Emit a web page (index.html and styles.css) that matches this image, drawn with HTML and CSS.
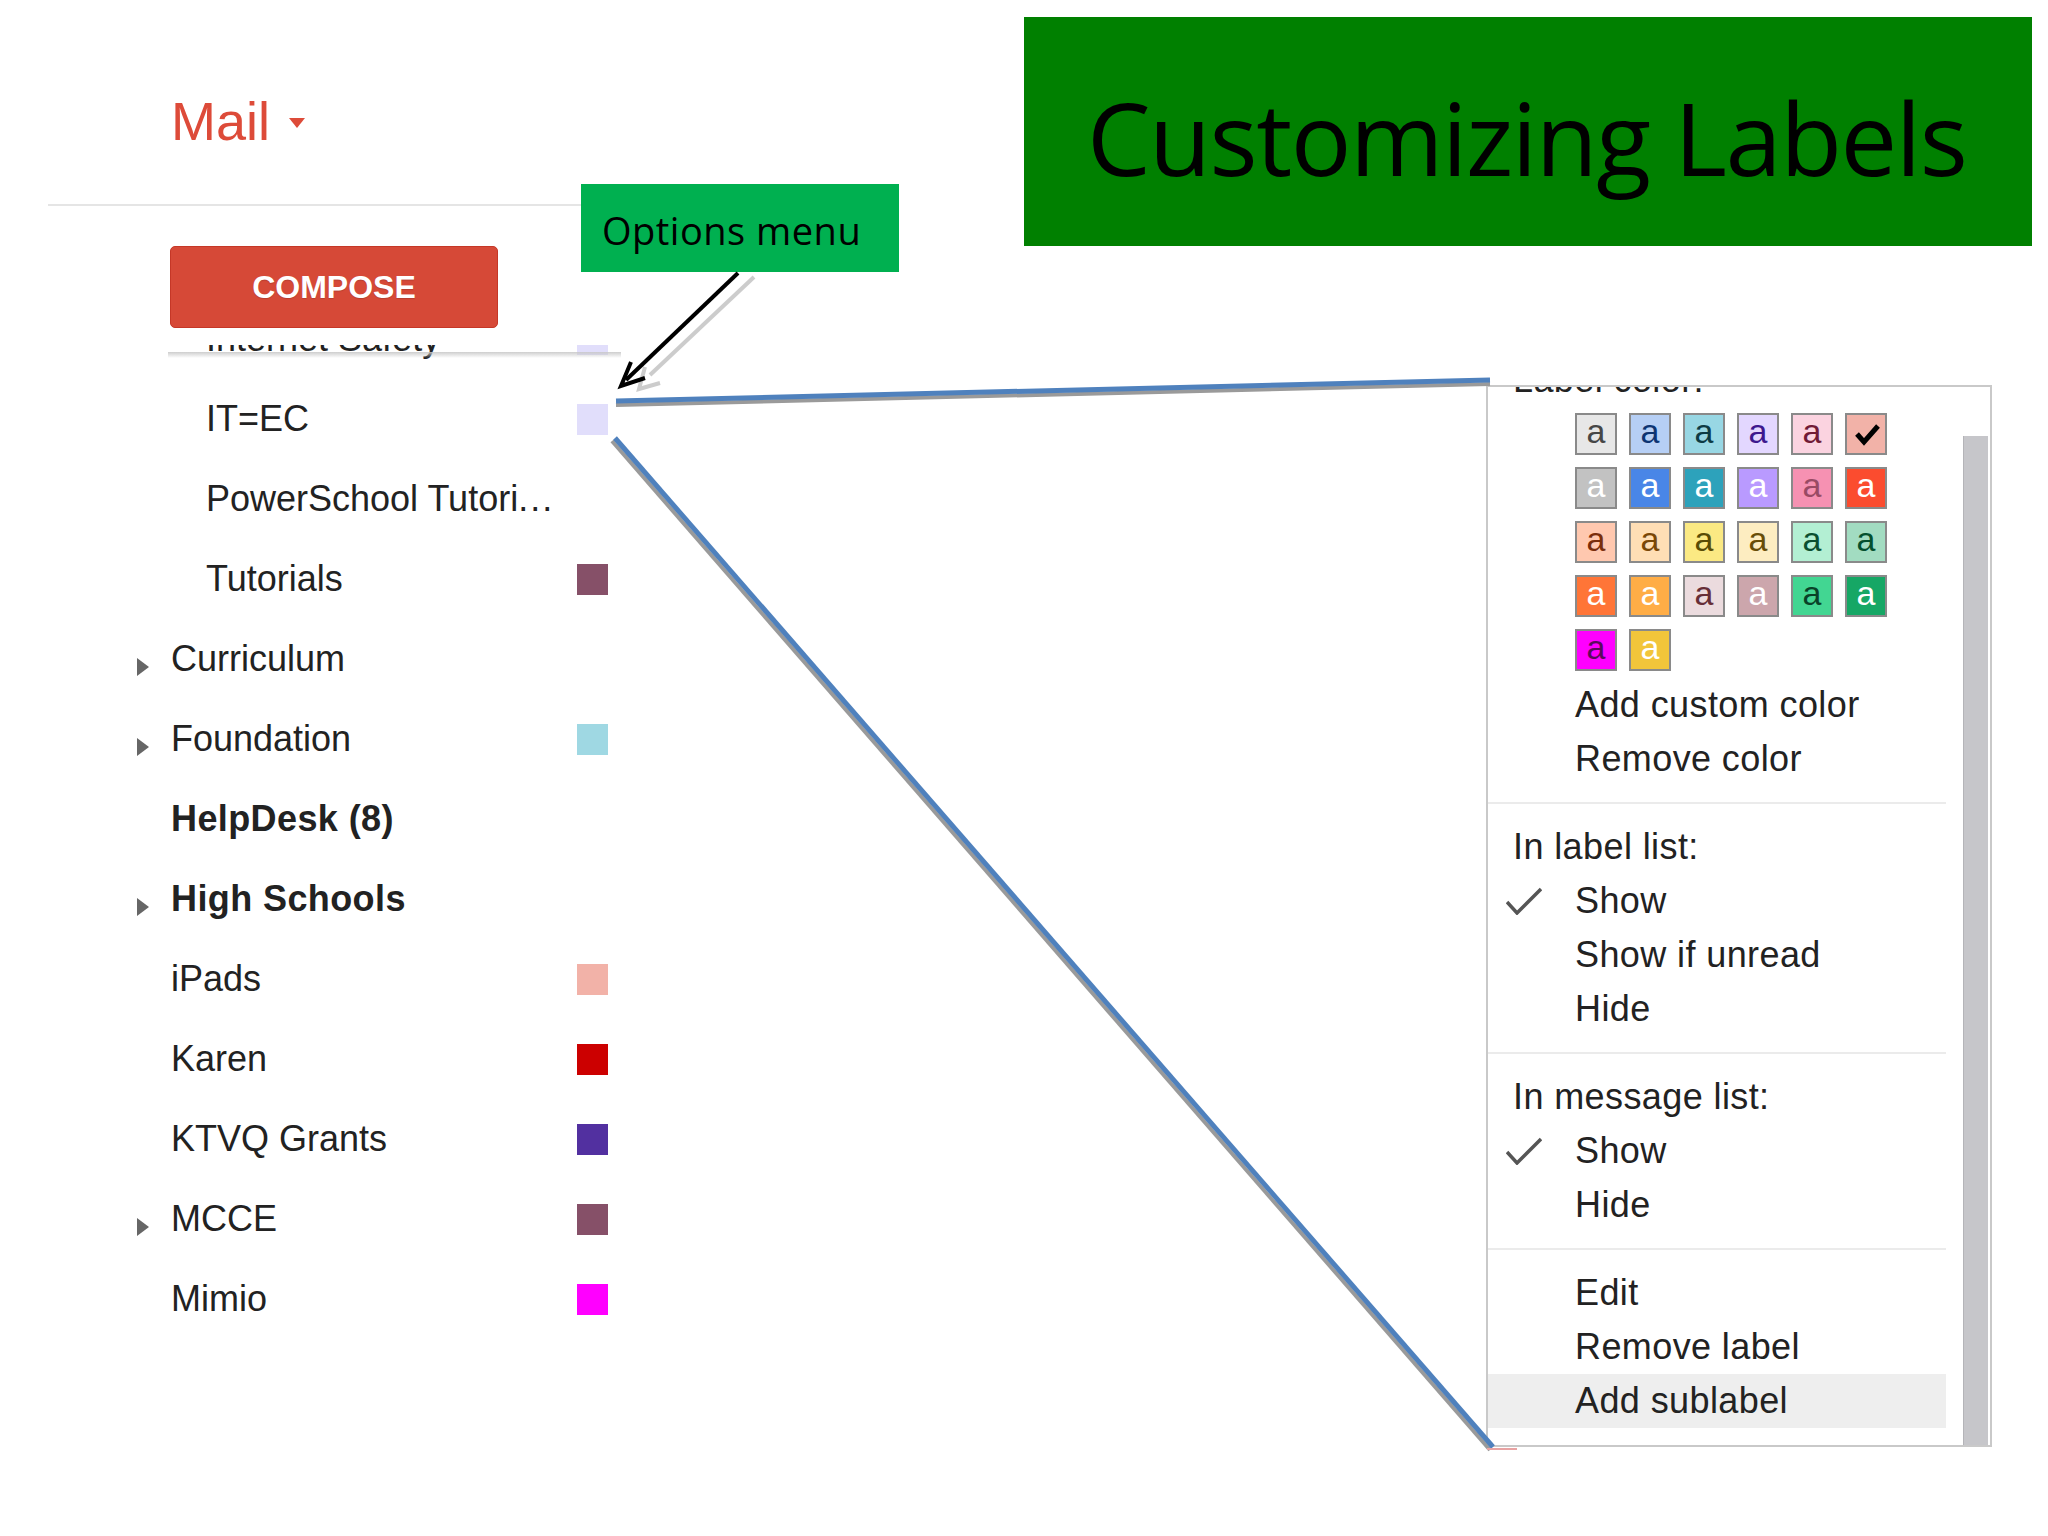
FILE: index.html
```html
<!DOCTYPE html>
<html>
<head>
<meta charset="utf-8">
<title>Customizing Labels</title>
<link rel="stylesheet" href="styles.css">
</head>
<body>
<div class="slide">
  <div class="gmail">
    <div class="mailhead"><span class="mail">Mail</span><span class="caret"></span></div>
    <div class="divider"></div>
    <div class="compose">COMPOSE</div>
    <div class="labels">
      <div class="row sub first"><span class="tog"></span><span class="name">Internet Safety</span><span class="sw lav"></span></div>
      <div class="row sub"><span class="tog"></span><span class="name">IT=EC</span><span class="sw lav"></span></div>
      <div class="row sub"><span class="tog"></span><span class="name">PowerSchool Tutori<span class="dots">...</span></span></div>
      <div class="row sub"><span class="tog"></span><span class="name">Tutorials</span><span class="sw mauve"></span></div>
      <div class="row"><span class="tog has"></span><span class="name">Curriculum</span></div>
      <div class="row"><span class="tog has"></span><span class="name">Foundation</span><span class="sw aqua"></span></div>
      <div class="row bold"><span class="tog"></span><span class="name">HelpDesk (8)</span></div>
      <div class="row bold"><span class="tog has"></span><span class="name">High Schools</span></div>
      <div class="row"><span class="tog"></span><span class="name">iPads</span><span class="sw salmon"></span></div>
      <div class="row"><span class="tog"></span><span class="name">Karen</span><span class="sw red"></span></div>
      <div class="row"><span class="tog"></span><span class="name">KTVQ Grants</span><span class="sw purple"></span></div>
      <div class="row"><span class="tog has"></span><span class="name">MCCE</span><span class="sw mauve"></span></div>
      <div class="row"><span class="tog"></span><span class="name">Mimio</span><span class="sw magenta"></span></div>
    </div>
  </div>

  <div class="right">
    <div class="title">Customizing Labels</div>
    <div class="menu">
      <div class="menu-body">
        <div class="sec sec1">
          <div class="mhead cut">Label color:</div>
          <div class="grid">
            <span class="ca p1">a</span><span class="ca p2">a</span><span class="ca p3">a</span><span class="ca p4">a</span><span class="ca p5">a</span><span class="ca p6"><svg class="bigchk" viewBox="0 0 38 38" width="38" height="38"><polyline points="10,19 17,27 31,11" fill="none" stroke="#000" stroke-width="5"/></svg></span>
            <span class="ca p7">a</span><span class="ca p8">a</span><span class="ca p9">a</span><span class="ca p10">a</span><span class="ca p11">a</span><span class="ca p12">a</span>
            <span class="ca p13">a</span><span class="ca p14">a</span><span class="ca p15">a</span><span class="ca p16">a</span><span class="ca p17">a</span><span class="ca p18">a</span>
            <span class="ca p19">a</span><span class="ca p20">a</span><span class="ca p21">a</span><span class="ca p22">a</span><span class="ca p23">a</span><span class="ca p24">a</span>
            <span class="ca p25">a</span><span class="ca p26">a</span>
          </div>
          <div class="mi">Add custom color</div>
          <div class="mi">Remove color</div>
        </div>
        <div class="sec">
          <div class="mhead">In label list:</div>
          <div class="mi chk"><svg class="tick" viewBox="0 0 36 28" width="36" height="28"><polyline points="1,15 11,26 35,2" fill="none" stroke="#555" stroke-width="3.5"/></svg><span class="lbl">Show</span></div>
          <div class="mi">Show if unread</div>
          <div class="mi">Hide</div>
        </div>
        <div class="sec">
          <div class="mhead">In message list:</div>
          <div class="mi chk"><svg class="tick" viewBox="0 0 36 28" width="36" height="28"><polyline points="1,15 11,26 35,2" fill="none" stroke="#555" stroke-width="3.5"/></svg><span class="lbl">Show</span></div>
          <div class="mi">Hide</div>
        </div>
        <div class="sec last">
          <div class="mi">Edit</div>
          <div class="mi">Remove label</div>
          <div class="mi hl">Add sublabel</div>
        </div>
      </div>
      <div class="scroll"><div class="thumb"></div></div>
    </div>
  </div>

  <div class="callout">Options menu</div>

  <svg class="connect" viewBox="0 0 2048 1536" width="2048" height="1536">
    <line x1="616" y1="405" x2="1490" y2="384" stroke="#9a9a9a" stroke-width="4"/>
    <line x1="616" y1="401" x2="1490" y2="380" stroke="#4f81bd" stroke-width="5"/>
    <line x1="612" y1="441" x2="1490" y2="1450" stroke="#9a9a9a" stroke-width="4"/>
    <line x1="615" y1="438" x2="1493" y2="1447" stroke="#4f81bd" stroke-width="5"/>
    <g fill="none" stroke="#cccccc" stroke-width="4">
      <line x1="754" y1="277" x2="650" y2="375"/>
      <polyline points="645,367 639,389 660,383"/>
    </g>
    <g fill="none" stroke="#000000" stroke-width="4">
      <line x1="738" y1="273" x2="626" y2="380"/>
      <polyline points="631,362 621,386 645,378"/>
    </g>
    <line x1="1487" y1="1449" x2="1517" y2="1449" stroke="#e8a3a3" stroke-width="2"/>
  </svg>
</div>
</body>
</html>
```

FILE: styles.css
```css
html, body {
  margin: 0;
  padding: 0;
  background: #ffffff;
}

.slide {
  position: relative;
  width: 2048px;
  height: 1536px;
  overflow: hidden;
  display: flex;
  background: #ffffff;
  font-family: "Liberation Sans", Arial, sans-serif;
}

/* ---------- Gmail sidebar ---------- */
.gmail {
  width: 1024px;
  flex: none;
}

.mailhead {
  height: 204px;
  box-sizing: border-box;
  padding: 94px 0 0 171px;
  display: flex;
  align-items: flex-start;
}

.mail {
  font-size: 54px;
  line-height: 54px;
  color: #dd4b39;
}

.caret {
  margin: 24px 0 0 19px;
  width: 0;
  height: 0;
  border-left: 8px solid transparent;
  border-right: 8px solid transparent;
  border-top: 10px solid #dd4b39;
}

.divider {
  margin-left: 48px;
  width: 600px;
  height: 2px;
  background: #e5e5e5;
}

.compose {
  margin: 40px 0 0 170px;
  width: 328px;
  height: 82px;
  box-sizing: border-box;
  background: #d64937;
  border: 1px solid #c53727;
  border-radius: 5px;
  color: #ffffff;
  font-weight: bold;
  font-size: 32px;
  display: flex;
  align-items: center;
  justify-content: center;
  text-shadow: 0 1px 1px rgba(0, 0, 0, 0.15);
}

.labels {
  position: relative;
  margin: 17px 0 0 130px;
  width: 495px;
  overflow: hidden;
}

.labels::before {
  content: "";
  position: absolute;
  left: 38px;
  right: 4px;
  top: 7px;
  height: 6px;
  background: linear-gradient(rgba(200, 200, 200, 0.9), rgba(255, 255, 255, 0));
}

.row {
  display: flex;
  align-items: center;
  height: 80px;
  font-size: 36px;
  line-height: 80px;
  color: #222222;
}

.row.first {
  margin-top: -46px;
}

.tog {
  width: 41px;
  flex: none;
  display: flex;
  align-items: center;
  height: 80px;
}

.tog.has::before {
  content: "";
  width: 0;
  height: 0;
  margin: 16px 0 0 7px;
  border-top: 9px solid transparent;
  border-bottom: 9px solid transparent;
  border-left: 12px solid #666666;
}

.name {
  flex: 1;
  white-space: nowrap;
}

.dots {
  letter-spacing: 2px;
}

.sub .name {
  padding-left: 35px;
}

.bold .name {
  font-weight: bold;
  letter-spacing: 0.4px;
}

.sw {
  flex: none;
  width: 31px;
  height: 31px;
  margin-right: 17px;
}

.lav { background: #e1defb; }
.mauve { background: #865068; }
.aqua { background: #9fd8e3; }
.salmon { background: #f2b2a8; }
.red { background: #cc0000; }
.purple { background: #5230a0; }
.magenta { background: #ff00ff; }

/* ---------- right column ---------- */
.right {
  width: 1024px;
  flex: none;
}

.title {
  margin-top: 17px;
  width: 1008px;
  height: 229px;
  box-sizing: border-box;
  padding: 70px 0 0 63px;
  background: #008000;
  color: #000000;
  font-family: "Open Sans", sans-serif;
  font-size: 101px;
  line-height: 101px;
  letter-spacing: -1.5px;
  white-space: nowrap;
}

.menu {
  margin: 139px 0 0 462px;
  width: 506px;
  height: 1062px;
  box-sizing: border-box;
  border: 2px solid #c9c9c9;
  display: flex;
  background: #ffffff;
}

.menu-body {
  width: 458px;
  flex: none;
  overflow: hidden;
}

.sec {
  padding: 16px 0;
  border-bottom: 2px solid #ebebeb;
}

.sec1 {
  padding-top: 0;
}

.sec.last {
  border-bottom: none;
  padding-bottom: 0;
}

.mhead,
.mi {
  height: 54px;
  line-height: 54px;
  font-size: 36px;
  letter-spacing: 0.4px;
  color: #222222;
  white-space: nowrap;
}

.mhead {
  padding-left: 25px;
}

.mhead.cut {
  margin-top: -34px;
}

.mi {
  padding-left: 87px;
}

.mi.chk {
  display: flex;
  align-items: center;
  padding-left: 18px;
}

.tick {
  flex: none;
  margin-right: 33px;
}

.hl {
  background: #eeeeee;
}

.grid {
  display: grid;
  grid-template-columns: repeat(6, 42px);
  grid-auto-rows: 42px;
  gap: 12px;
  margin: 6px 0 7px 87px;
}

.ca {
  width: 42px;
  height: 42px;
  box-sizing: border-box;
  border: 2px solid #8a8a8a;
  font-size: 34px;
  line-height: 32px;
  letter-spacing: 0;
  text-align: center;
  display: block;
}

.bigchk {
  display: block;
}

.p1 { background: #e7e7e7; color: #464646; }
.p2 { background: #b6cff5; color: #0d3472; }
.p3 { background: #98d7e4; color: #0d3b44; }
.p4 { background: #e3d7ff; color: #3d188e; }
.p5 { background: #fbd3e0; color: #711a36; }
.p6 { background: #f2b2a8; color: #8a1c0a; }
.p7 { background: #c2c2c2; color: #ffffff; }
.p8 { background: #4986e7; color: #ffffff; }
.p9 { background: #2da2bb; color: #ffffff; }
.p10 { background: #b99aff; color: #ffffff; }
.p11 { background: #f691b2; color: #994a64; }
.p12 { background: #fb4c2f; color: #ffffff; }
.p13 { background: #ffc8af; color: #7a2e0b; }
.p14 { background: #ffdeb5; color: #7a4706; }
.p15 { background: #fbe983; color: #594c05; }
.p16 { background: #fdedc1; color: #684e07; }
.p17 { background: #b3efd3; color: #0b4f30; }
.p18 { background: #a2dcc1; color: #04502e; }
.p19 { background: #ff7537; color: #ffffff; }
.p20 { background: #ffad46; color: #ffffff; }
.p21 { background: #ebdbde; color: #662e37; }
.p22 { background: #cca6ac; color: #ffffff; }
.p23 { background: #42d692; color: #094228; }
.p24 { background: #16a765; color: #ffffff; }
.p25 { background: #ff00ff; color: #5a0a5a; }
.p26 { background: #f2c53a; color: #ffffff; }

.scroll {
  flex: 1;
}

.thumb {
  margin: 49px 0 0 17px;
  width: 25px;
  height: 1009px;
  box-sizing: border-box;
  background: #c6c6ca;
  border-left: 1px solid #b4b4b8;
}

/* ---------- overlays ---------- */
.callout {
  position: absolute;
  left: 581px;
  top: 184px;
  width: 318px;
  height: 88px;
  box-sizing: border-box;
  padding: 27px 0 0 21px;
  background: #00b050;
  color: #000000;
  font-family: "Open Sans", sans-serif;
  font-size: 38px;
  line-height: 38px;
  letter-spacing: 0.5px;
  white-space: nowrap;
}

.connect {
  position: absolute;
  left: 0;
  top: 0;
  pointer-events: none;
}
```
